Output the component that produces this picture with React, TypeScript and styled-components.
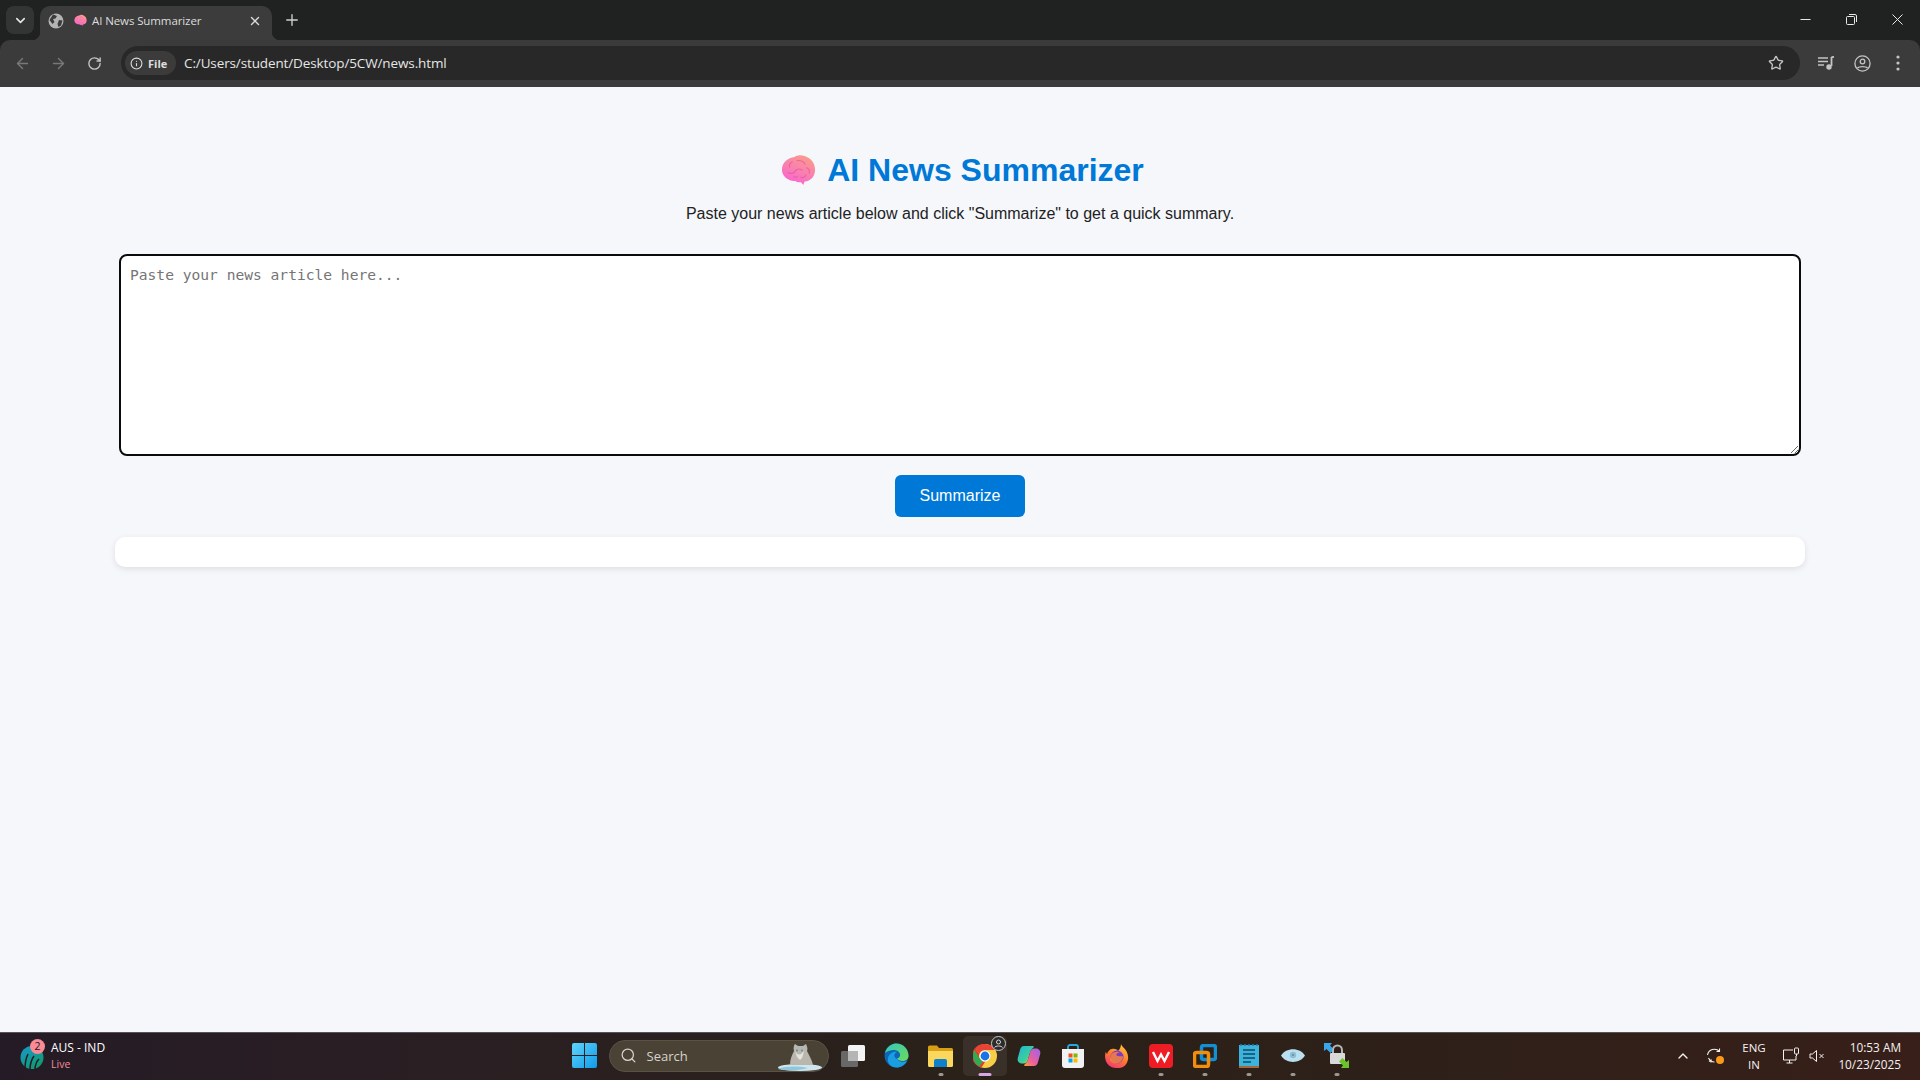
import { createGlobalStyle, styled } from "styled-components";
import { ArrowLeft, ArrowRight, ChevronDown, ChevronUp, Info, Plus, RotateCw, Search, Star, X } from "lucide-react";
import { useId } from "react";

const GlobalStyle = createGlobalStyle`
  html, body, #root {
    height: 100%;
    margin: 0;
  }
  body {
    overflow: hidden;
    background: #f5f7fb;
    font-family: "Liberation Sans", Arial, sans-serif;
  }
  * {
    box-sizing: border-box;
  }
`;

const Screen = styled.div`
  height: 1080px;
  display: flex;
  flex-direction: column;
  background: #202222;
`;

/* browser chrome */
const TabStrip = styled.div`
  height: 40px;
  flex: none;
  background: #202222;
  display: flex;
  align-items: flex-end;
  padding-left: 6px;
`;

const TabSearch = styled.div`
  width: 28px;
  height: 28px;
  margin-bottom: 6px;
  border-radius: 8px;
  background: #333535;
  color: #e6e6e6;
  display: flex;
  align-items: center;
  justify-content: center;
`;

const Tab = styled.div`
  position: relative;
  width: 232px;
  height: 34px;
  margin-left: 6px;
  padding: 0 10px 5px 8px;
  background: #3c3c3c;
  border-radius: 10px 10px 0 0;
  display: flex;
  align-items: center;
  color: #dcdcdc;
  font: 11.5px "Open Sans", "Noto Sans", sans-serif;

  &::before,
  &::after {
    content: "";
    position: absolute;
    bottom: 0;
    width: 8px;
    height: 8px;
  }
  &::before {
    left: -8px;
    background: radial-gradient(circle at 0 0, transparent 8px, #3c3c3c 8.5px);
  }
  &::after {
    right: -8px;
    background: radial-gradient(circle at 100% 0, transparent 8px, #3c3c3c 8.5px);
  }
`;

const FaviconGap = styled.span`
  width: 10px;
`;

const TabTitle = styled.span`
  flex: 1;
  margin-left: 5px;
  letter-spacing: -0.1px;
`;

const NewTab = styled.div`
  margin: 0 0 9px 11px;
  height: 20px;
  color: #d0d0d0;
`;

const WindowControls = styled.div`
  margin-left: auto;
  align-self: flex-start;
  height: 39px;
  display: flex;
  color: #e8e8e8;
`;

const WindowButton = styled.div`
  width: 46px;
  height: 39px;
  display: flex;
  align-items: center;
  justify-content: center;
`;

const Toolbar = styled.div`
  height: 47px;
  flex: none;
  background: #3b3b3b;
  border-radius: 10px 10px 0 0;
  display: flex;
  align-items: center;
  padding: 0 0 1px 4px;
`;

const NavButton = styled.div<{ $dim?: boolean }>`
  width: 36px;
  height: 34px;
  display: flex;
  align-items: center;
  justify-content: center;
  color: ${({ $dim }) => ($dim ? "#787878" : "#c4c4c4")};
`;

const Omnibox = styled.div`
  width: 1679px;
  height: 34px;
  margin: 0 8px 0 9px;
  padding: 0 16px 0 4px;
  background: #282828;
  border-radius: 17px;
  display: flex;
  align-items: center;
`;

const FileChip = styled.div`
  width: 51px;
  height: 24px;
  padding-left: 5px;
  background: #3b3b3b;
  border-radius: 12px;
  display: flex;
  align-items: center;
  gap: 5px;
  color: #dddddd;
  font: 700 11px "Open Sans", "Noto Sans", sans-serif;
`;

const Address = styled.div`
  margin-left: 8px;
  flex: 1;
  color: #e6e6e6;
  font: 13.5px "Open Sans", "Noto Sans", sans-serif;
  letter-spacing: -0.12px;
`;

/* the page */
const Page = styled.main`
  flex: 1;
  background: #f5f7fb;
  display: flex;
  flex-direction: column;
  align-items: center;
  padding-top: 65px;
`;

const Title = styled.h1`
  margin: 0;
  padding-left: 5px;
  display: flex;
  align-items: center;
  gap: 11px;
  color: #0078d7;
  font-size: 32px;
  line-height: 37px;
  font-weight: 700;
`;

const Subtitle = styled.p`
  margin: 16px 0 0;
  color: #222222;
  font-size: 16px;
  line-height: 18px;
`;

const ArticleInput = styled.textarea`
  width: 1682px;
  height: 202px;
  margin-top: 31px;
  padding: 9px;
  background: #ffffff;
  border: 2.5px solid #0b0b0b;
  border-radius: 8px;
  outline: none;
  font-family: "DejaVu Sans Mono", monospace;
  font-size: 14.6px;
  line-height: 19px;

  &::placeholder {
    color: #757575;
  }
`;

const SummarizeButton = styled.button`
  width: 130px;
  height: 42px;
  margin-top: 19px;
  border: none;
  border-radius: 6px;
  background: #0078d7;
  color: #ffffff;
  font-family: "Liberation Sans", Arial, sans-serif;
  font-size: 16px;
`;

const Result = styled.div`
  width: 1690px;
  height: 30px;
  margin-top: 20px;
  background: #ffffff;
  border-radius: 10px;
  box-shadow: 0 2px 6px rgba(0, 0, 0, 0.1);
`;

/* windows taskbar */
const Taskbar = styled.footer`
  height: 48px;
  flex: none;
  display: grid;
  grid-template-columns: 1fr auto 1fr;
  align-items: center;
  padding-bottom: 2px;
  border-top: 1px solid #55525a;
  background: linear-gradient(90deg, #251b26 0%, #2a1f22 25%, #2a2119 50%, #2e2019 75%, #381f19 100%);
  color: #ffffff;
  font: 12px "Open Sans", "Noto Sans", sans-serif;
`;

const Widget = styled.div`
  display: flex;
  align-items: center;
  gap: 6px;
  padding-left: 20px;
`;

const WidgetLogo = styled.div`
  position: relative;
  width: 25px;
  height: 25px;
  margin-top: 3px;
`;

const WidgetBadge = styled.span`
  position: absolute;
  top: -6px;
  right: 0;
  width: 15px;
  height: 15px;
  border-radius: 50%;
  background: #f98a96;
  color: #1d1416;
  font-size: 10.5px;
  line-height: 15px;
  text-align: center;
`;

const WidgetText = styled.div`
  font-size: 12px;
  line-height: 16px;
`;

const LiveLabel = styled.div`
  color: #f38b98;
  font-size: 10.5px;
`;

const TaskCenter = styled.div`
  display: flex;
  align-items: center;
`;

const SearchBox = styled.div`
  position: relative;
  width: 220px;
  height: 32px;
  margin: 0 2px 0 3px;
  padding-left: 10px;
  background: #4b4236;
  border: 1px solid #5b5246;
  border-radius: 16px;
  display: flex;
  align-items: center;
  gap: 10px;
  color: #d6d3cc;
  font-size: 13px;
`;

const SearchArt = styled.div`
  position: absolute;
  right: 6px;
  bottom: 0;
  height: 28px;
`;

const TaskSlot = styled.div<{ $active?: boolean }>`
  position: relative;
  width: 44px;
  height: 40px;
  display: flex;
  align-items: center;
  justify-content: center;
  border-radius: 5px;
  background: ${({ $active }) => ($active ? "rgba(255, 255, 255, 0.07)" : "transparent")};
`;

const StartSlot = styled(TaskSlot)`
  padding-left: 2px;
`;

const RunDot = styled.span<{ $active?: boolean }>`
  position: absolute;
  bottom: 0;
  left: 50%;
  transform: translateX(-50%);
  width: ${({ $active }) => ($active ? "13px" : "5px")};
  height: 3px;
  border-radius: 2px;
  background: ${({ $active }) => ($active ? "#d9a6e6" : "#9b9794")};
`;

const ProfileBadge = styled.div`
  position: absolute;
  top: 0;
  right: 1px;
  width: 15px;
  height: 15px;
  border-radius: 50%;
  background: #2b2b2b;
  border: 1px solid #c8c8c8;
`;

const Tray = styled.div`
  justify-self: end;
  display: flex;
  align-items: center;
  padding-right: 19px;
  color: #f2f2f2;
`;

const TrayIcon = styled.div<{ $w: number }>`
  width: ${({ $w }) => $w}px;
  display: flex;
  justify-content: center;
`;

const Lang = styled.div`
  width: 38px;
  margin-left: 4px;
  text-align: center;
  font-size: 11.5px;
  line-height: 17px;
`;

const Clock = styled.div`
  width: 76px;
  text-align: right;
  font-size: 11.8px;
  line-height: 17px;
`;

function Brain({ size }: { size: number }) {
  const id = useId();
  return (
    <svg width={size} height={size} viewBox="0 0 36 36">
      <defs>
        <linearGradient id={id} x1="0.7" y1="0" x2="0.2" y2="1">
          <stop offset="0" stopColor="#fb9a8c" />
          <stop offset="0.5" stopColor="#f97fb0" />
          <stop offset="1" stopColor="#fb5fd6" />
        </linearGradient>
      </defs>
      <path
        d="M14 4c4-2.500 10-2 14 1 4 2 7 7 7 12 0 5-2 9-6 11-2 1-4 1.500-5 1.500l-1 3.500-2.500-3c-2 .5-4.500 0-6-1.500-2 .5-5 0-7-1.500C3 25 1 21 1 17 1 10 7 4.500 14 4Z"
        fill={`url(#${id})`}
      />
      <path
        d="M12 9c-3 1-4 4-3 6M16 8c4-1 8 1 9 4M7 20c3 2 7 1 8-2 2-2 5-2 7 0M26 15c2 1 4 3 3 6M20 25c2 1 5 0 6-3M13 24c1 1 3 1 4 0"
        stroke="#e0559f"
        strokeWidth="1.200"
        fill="none"
        opacity="0.7"
      />
    </svg>
  );
}

function TabGlobe() {
  return (
    <svg width="16" height="16" viewBox="0 0 16 16">
      <circle cx="8" cy="8" r="7.500" fill="#b4b4b4" />
      <path d="M5 1.500 9 3 7.500 5.500 5 6 6.500 9 4.500 11 1.500 7ZM11 7l3.500.5-1.500 5-2.500 1.500-1-3Z" fill="#3c3c3c" />
    </svg>
  );
}

function WinLogo() {
  return (
    <svg width="25" height="25" viewBox="0 0 25 25">
      <defs>
        <linearGradient id="winblue" x1="0" y1="0" x2="1" y2="1">
          <stop offset="0" stopColor="#5fd4fb" />
          <stop offset="1" stopColor="#0f9bea" />
        </linearGradient>
      </defs>
      <path d="M0 2a2 2 0 0 1 2-2h10v12H0ZM13 0h10a2 2 0 0 1 2 2v10H13ZM0 13h12v12H2a2 2 0 0 1-2-2ZM13 13h12v10a2 2 0 0 1-2 2H13Z" fill="url(#winblue)" />
    </svg>
  );
}

function SnowLeopard() {
  return (
    <svg width="46" height="28" viewBox="0 0 46 28">
      <ellipse cx="24" cy="24.500" rx="22" ry="3.500" fill="#cfe6ee" />
      <path d="M2 26c8-3 18-3 30-1-10 3-22 3-30 1Z" fill="#8fc8dc" />
      <path d="M14 22c0-6 2-10 4-14-1-3 0-6 1-7l3 2h5l3-2c1 2 2 5 1 7 2 4 5 9 6 14Z" fill="#b9b6ad" />
      <path d="M19 7c2 6 6 6 9 0-1 5-1 8-4 10-3-2-4-5-5-10Z" fill="#e5e3dc" />
      <circle cx="21" cy="7.500" r="1" fill="#4e90a8" />
      <circle cx="26" cy="7.500" r="1" fill="#4e90a8" />
    </svg>
  );
}

function TaskView() {
  return (
    <svg width="24" height="24" viewBox="0 0 24 24">
      <rect x="7" y="1" width="17" height="16" rx="1.500" fill="#f4f4f4" />
      <rect x="0" y="7" width="17" height="16" rx="1.500" fill="#6d6d6d" opacity="0.95" />
      <rect x="7" y="7" width="10" height="10" fill="#b5b5b5" />
    </svg>
  );
}

function Edge() {
  return (
    <svg width="25" height="25" viewBox="0 0 25 25">
      <defs>
        <linearGradient id="edgeA" x1="0" y1="0" x2="1" y2="1">
          <stop offset="0" stopColor="#33c6c0" />
          <stop offset="1" stopColor="#6edc53" />
        </linearGradient>
      </defs>
      <circle cx="12.500" cy="12.500" r="12" fill="#0c67b8" />
      <path d="M1 10C3 3 8 .5 12.500.5 19 .5 24.500 6 24.500 13c0 3-3 5-6 5-2.500 0-5-1-5.500-2.500 2-.5 3.500-2 3-4.500C15 8 12 6.500 9 7 5 7.500 2 9 1 10Z" fill="url(#edgeA)" />
      <path d="M13 16c2 3 6 4 10 2-2 4-6 6.500-10.500 6.500C7 24.500 3 20 4 15c1-4 5-7 9-6-3 1-4 5 0 7Z" fill="#1b9de2" />
    </svg>
  );
}

function Explorer() {
  return (
    <svg width="25" height="22" viewBox="0 0 25 22">
      <path d="M0 2a1.500 1.500 0 0 1 1.500-1.500H9L11 3h12.500A1.500 1.500 0 0 1 25 4.500V8H0Z" fill="#d79f14" />
      <path d="M0 6h25v14.500a1.500 1.500 0 0 1-1.500 1.500h-22A1.500 1.500 0 0 1 0 20.500Z" fill="#fbd75d" />
      <path d="M6 16a2 2 0 0 1 2-2h9a2 2 0 0 1 2 2v6H6Z" fill="#0f80cc" />
    </svg>
  );
}

function ChromeLogo() {
  return (
    <svg width="24" height="24" viewBox="0 0 24 24">
      <circle cx="12" cy="12" r="12" fill="#f7ce46" />
      <path d="M12 0a12 12 0 0 1 10.400 6H12a6 6 0 0 0-5.600 3.700L2 3.900A12 12 0 0 1 12 0Z" fill="#ea4335" />
      <path d="M2 3.900 6.400 9.700A6 6 0 0 0 12 18l-3.500 5.500A12 12 0 0 1 2 3.900Z" fill="#e53a2e" />
      <path d="M1.600 6 7 15l3 2.700-3.800 4.700A12 12 0 0 1 1.600 6Z" fill="#34a853" />
      <circle cx="12" cy="12" r="5.500" fill="#ffffff" />
      <circle cx="12" cy="12" r="4.400" fill="#1a73e8" />
    </svg>
  );
}

function Copilot() {
  return (
    <svg width="24" height="24" viewBox="0 0 24 24">
      <defs>
        <linearGradient id="copA" x1="0" y1="0" x2="1" y2="1">
          <stop offset="0" stopColor="#1fb4dc" />
          <stop offset="0.6" stopColor="#3ccf9a" />
          <stop offset="1" stopColor="#e8d83c" />
        </linearGradient>
        <linearGradient id="copB" x1="1" y1="0" x2="0" y2="1">
          <stop offset="0" stopColor="#9a63ee" />
          <stop offset="0.6" stopColor="#ec5f9c" />
          <stop offset="1" stopColor="#f8a03a" />
        </linearGradient>
      </defs>
      <path d="M7 2h9c1 0 1 1 .5 1.500C14 5 13 8 12 12l-1.500 5c-.5 1.500-2 2.500-3.500 2.500H5C2 19.500 0 17 .8 14L3 6c.6-2.500 2-4 4-4Z" fill="url(#copA)" />
      <path d="M17 22H8c-1 0-1-1-.5-1.500C10 19 11 16 12 12l1.500-5C14 5.500 15.500 4.500 17 4.500h2c3 0 5 2.500 4.200 5.500L21 18c-.6 2.500-2 4-4 4Z" fill="url(#copB)" />
    </svg>
  );
}

function Store() {
  return (
    <svg width="24" height="24" viewBox="0 0 24 24">
      <path d="M7 7V3a2 2 0 0 1 2-2h6a2 2 0 0 1 2 2v4" stroke="#28a8e0" strokeWidth="1.800" fill="none" />
      <path d="M1 5h22v16a3 3 0 0 1-3 3H4a3 3 0 0 1-3-3Z" fill="#f2f2f2" />
      <rect x="7.500" y="9.500" width="4" height="4" fill="#f25022" />
      <rect x="12.500" y="9.500" width="4" height="4" fill="#7fba00" />
      <rect x="7.500" y="14.500" width="4" height="4" fill="#00a4ef" />
      <rect x="12.500" y="14.500" width="4" height="4" fill="#ffb900" />
    </svg>
  );
}

function Firefox() {
  return (
    <svg width="24" height="24" viewBox="0 0 24 24">
      <defs>
        <linearGradient id="foxA" x1="0.7" y1="0" x2="0.2" y2="1">
          <stop offset="0" stopColor="#ffc13a" />
          <stop offset="0.5" stopColor="#ff7a2e" />
          <stop offset="1" stopColor="#f0327a" />
        </linearGradient>
      </defs>
      <path d="M16 0c.5 2 3 3.500 5 6.500 3 5 3 11-1 15-4 3.500-11 3.500-16 0C0 18-1 12 1 7.500c0 1 .5 2 1 2.500C3 7 5 5 7 5c2-.5 5 0 6 2 2-2 3-4.500 3-7Z" fill="url(#foxA)" />
      <circle cx="12" cy="13" r="6.500" fill="#7b3bc4" />
      <path d="M6 11c2-3 6-4 9-2.500-3 0-4 1.500-3.500 3 2 1.500 6 0 6.500 1 0 4-3 7-7 7-3 0-5-1.500-6-4Z" fill="#ff8a35" opacity="0.8" />
    </svg>
  );
}

function Wps() {
  return (
    <svg width="24" height="24" viewBox="0 0 24 24">
      <rect width="24" height="24" rx="4" fill="#ee1c25" />
      <path d="M4 8l4.500 9L12 10.500 15.500 17 20 8" stroke="#ffffff" strokeWidth="2.400" fill="none" />
    </svg>
  );
}

function Vmware() {
  return (
    <svg width="24" height="24" viewBox="0 0 24 24">
      <rect x="8.500" y="1.500" width="14" height="14" rx="2" fill="none" stroke="#1390d4" strokeWidth="3.500" />
      <rect x="1.500" y="8.500" width="14" height="14" rx="2" fill="none" stroke="#f18e0d" strokeWidth="3.500" />
    </svg>
  );
}

function Notepad() {
  return (
    <svg width="20" height="24" viewBox="0 0 20 24">
      <rect x="0" y="1" width="20" height="22" fill="#3bb3dc" />
      <rect x="0" y="22" width="20" height="2" fill="#a5683a" />
      <path d="M4 6h12M4 10h12M4 14h12M4 18h8" stroke="#124a66" strokeWidth="1.500" />
      <path d="M2 0v2M6 0v2M10 0v2M14 0v2M18 0v2" stroke="#1e7ea8" strokeWidth="1.500" />
    </svg>
  );
}

function Eye() {
  return (
    <svg width="24" height="13" viewBox="0 0 24 13">
      <path d="M0 6.500c5-8.500 19-8.500 24 0-5 8.500-19 8.500-24 0Z" fill="#b9e0f0" />
      <circle cx="12" cy="6" r="3.200" fill="#8fbcd0" />
      <circle cx="12" cy="6" r="1" fill="#5f8aa0" />
    </svg>
  );
}

function LockTransfer() {
  return (
    <svg width="25" height="25" viewBox="0 0 25 25">
      <path d="M0 0h8L6 2.500l4 4-3.500 3.500-4-4L0 8Z" fill="#3aa6ea" />
      <path d="M9 11V7a4.500 4.500 0 0 1 9 0v4" stroke="#b5b5b5" strokeWidth="2" fill="none" />
      <rect x="6" y="10" width="15" height="11" rx="1" fill="#d9d9d9" />
      <path d="M25 25h-8l2-2.500-4-4 3.500-3.500 4 4 2.500-2Z" fill="#6bc42c" />
    </svg>
  );
}

function WidgetMark() {
  return (
    <svg width="25" height="25" viewBox="0 0 25 25">
      <defs>
        <linearGradient id="iccA" x1="0" y1="0" x2="0.6" y2="1">
          <stop offset="0" stopColor="#1898d0" />
          <stop offset="1" stopColor="#0f9b6e" />
        </linearGradient>
      </defs>
      <circle cx="12" cy="12.500" r="11.500" fill="url(#iccA)" />
      <path d="M5 24c0-6 1-11 3-15M10 25c0-6 1-10 4-14M15 25c0-5 1-8 4-11" stroke="#241a25" strokeWidth="1.500" fill="none" />
    </svg>
  );
}

const slots = [
  { icon: <TaskView />, dot: false },
  { icon: <Edge />, dot: false },
  { icon: <Explorer />, dot: true },
  { icon: <ChromeLogo />, dot: false, active: true },
  { icon: <Copilot />, dot: false },
  { icon: <Store />, dot: false },
  { icon: <Firefox />, dot: false },
  { icon: <Wps />, dot: true },
  { icon: <Vmware />, dot: true },
  { icon: <Notepad />, dot: true },
  { icon: <Eye />, dot: true },
  { icon: <LockTransfer />, dot: true },
];

function App() {
  return (
    <Screen>
      <GlobalStyle />
      <TabStrip>
        <TabSearch>
          <ChevronDown size={15} strokeWidth={2.5} />
        </TabSearch>
        <Tab>
          <TabGlobe />
          <FaviconGap />
          <Brain size={13} />
          <TabTitle>AI News Summarizer</TabTitle>
          <X size={14} strokeWidth={2.4} />
        </Tab>
        <NewTab>
          <Plus size={18} strokeWidth={1.8} />
        </NewTab>
        <WindowControls>
          <WindowButton>
            <svg width="11" height="11" viewBox="0 0 11 11">
              <path d="M0.500 5.500h10" stroke="currentColor" />
            </svg>
          </WindowButton>
          <WindowButton>
            <svg width="11" height="11" viewBox="0 0 11 11">
              <rect x="0.500" y="2.500" width="8" height="8" rx="1" fill="none" stroke="currentColor" />
              <path d="M3 .5h6a1.500 1.500 0 0 1 1.500 1.500v6" fill="none" stroke="currentColor" />
            </svg>
          </WindowButton>
          <WindowButton>
            <svg width="11" height="11" viewBox="0 0 11 11">
              <path d="M0.500 0.500l10 10M10.500 0.500l-10 10" stroke="currentColor" />
            </svg>
          </WindowButton>
        </WindowControls>
      </TabStrip>

      <Toolbar>
        <NavButton $dim>
          <ArrowLeft size={17} />
        </NavButton>
        <NavButton $dim>
          <ArrowRight size={17} />
        </NavButton>
        <NavButton>
          <RotateCw size={15} strokeWidth={2.2} />
        </NavButton>
        <Omnibox>
          <FileChip>
            <Info size={13} />
            File
          </FileChip>
          <Address>C:/Users/student/Desktop/5CW/news.html</Address>
          <Star size={16} color="#c4c4c4" strokeWidth={2} />
        </Omnibox>
        <NavButton>
          <svg width="16" height="14" viewBox="0 0 16 14">
            <path d="M0 2h10M0 5.500h10M0 9h6" stroke="currentColor" strokeWidth="1.500" />
            <path d="M13.500 1v9" stroke="currentColor" strokeWidth="1.800" />
            <path d="M13.500 1H16" stroke="currentColor" strokeWidth="1.800" />
            <circle cx="11" cy="11" r="2.700" fill="currentColor" />
          </svg>
        </NavButton>
        <NavButton>
          <svg width="17" height="17" viewBox="0 0 17 17" fill="none" stroke="currentColor" strokeWidth="1.300">
            <circle cx="8.500" cy="8.500" r="7.600" />
            <circle cx="8.500" cy="6.500" r="2.300" />
            <path d="M3.500 13.200c1.500-2.200 8.500-2.200 10 0" />
          </svg>
        </NavButton>
        <NavButton>
          <svg width="4" height="16" viewBox="0 0 4 16" fill="currentColor">
            <circle cx="2" cy="2" r="1.600" />
            <circle cx="2" cy="8" r="1.600" />
            <circle cx="2" cy="14" r="1.600" />
          </svg>
        </NavButton>
      </Toolbar>

      <Page>
        <Title>
          <Brain size={35} />
          AI News Summarizer
        </Title>
        <Subtitle>Paste your news article below and click "Summarize" to get a quick summary.</Subtitle>
        <ArticleInput placeholder="Paste your news article here..." />
        <SummarizeButton>Summarize</SummarizeButton>
        <Result />
      </Page>

      <Taskbar>
        <Widget>
          <WidgetLogo>
            <WidgetMark />
            <WidgetBadge>2</WidgetBadge>
          </WidgetLogo>
          <WidgetText>
            AUS - IND
            <LiveLabel>Live</LiveLabel>
          </WidgetText>
        </Widget>

        <TaskCenter>
          <StartSlot>
            <WinLogo />
          </StartSlot>
          <SearchBox>
            <Search size={17} strokeWidth={1.8} />
            Search
            <SearchArt>
              <SnowLeopard />
            </SearchArt>
          </SearchBox>
          {slots.map((slot, i) => (
            <TaskSlot key={i} $active={slot.active}>
              {slot.icon}
              {slot.active && (
                <ProfileBadge>
                  <svg width="13" height="13" viewBox="0 0 13 13" fill="none" stroke="#d8d8d8">
                    <circle cx="6.500" cy="5" r="2" />
                    <path d="M2.500 10.500c1-2 7-2 8 0" />
                  </svg>
                </ProfileBadge>
              )}
              {(slot.dot || slot.active) && <RunDot $active={slot.active} />}
            </TaskSlot>
          ))}
        </TaskCenter>

        <Tray>
          <TrayIcon $w={32}>
            <ChevronUp size={16} strokeWidth={2} />
          </TrayIcon>
          <TrayIcon $w={32}>
            <svg width="18" height="18" viewBox="0 0 18 18" fill="none" stroke="currentColor" strokeWidth="1.100">
              <path d="M1.500 8a7 7 0 0 1 12-3.500M13.500 1.500v3h-3M3 14.500l2-1.500v2.500" />
              <path d="M2.500 11a7 7 0 0 0 6 4" />
              <circle cx="14" cy="13" r="4" fill="#f99a1c" stroke="none" />
            </svg>
          </TrayIcon>
          <Lang>
            ENG
            <br />
            IN
          </Lang>
          <TrayIcon $w={36}>
            <svg width="17" height="17" viewBox="0 0 17 17" fill="none" stroke="currentColor" strokeWidth="1">
              <path d="M10 3H.5v10H13V9M6.500 13v3M3.500 16h6" />
              <rect x="11.500" y="1" width="4" height="6" rx="1" />
              <path d="M13.500 7v2" />
            </svg>
          </TrayIcon>
          <TrayIcon $w={16}>
            <svg width="16" height="14" viewBox="0 0 16 14" fill="none" stroke="currentColor" strokeWidth="1">
              <path d="M1 5v4h2.500L7.500 12.500V1.500L3.500 5ZM10.500 5l4 4M14.500 5l-4 4" />
            </svg>
          </TrayIcon>
          <Clock>
            10:53 AM
            <br />
            10/23/2025
          </Clock>
        </Tray>
      </Taskbar>
    </Screen>
  );
}

export default App;
